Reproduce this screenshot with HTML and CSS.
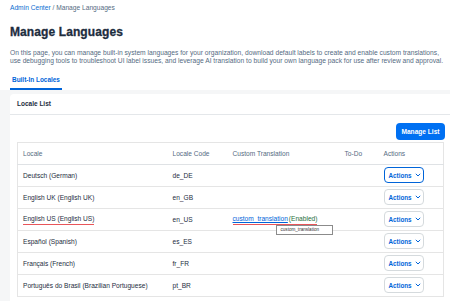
FILE: index.html
```html
<!DOCTYPE html>
<html>
<head>
<meta charset="utf-8">
<link rel="stylesheet" href="styles.css">
</head>
<body>
<div class="page">
  <header class="top">
    <div class="crumbs"><a class="crumb-link">Admin Center</a> <span class="crumb-cur">/ Manage Languages</span></div>
    <h1 class="title">Manage Languages</h1>
    <p class="desc"><span class="line">On this page, you can manage built-in system languages for your organization, download default labels to create and enable custom translations,</span><span class="line">use debugging tools to troubleshoot UI label issues, and leverage AI translation to build your own language pack for use after review and approval.</span></p>
    <nav class="tabs"><span class="tab active">Built-In Locales</span></nav>
  </header>
  <main class="body">
    <section class="card">
      <div class="card-head">Locale List</div>
      <div class="toolbar"><button class="btn-primary">Manage List</button></div>
      <table class="grid">
        <colgroup><col class="c1"><col class="c2"><col class="c3"><col class="c4"><col></colgroup>
        <thead>
          <tr><th>Locale</th><th>Locale Code</th><th>Custom Translation</th><th>To-Do</th><th>Actions</th></tr>
        </thead>
        <tbody>
          <tr><td>Deutsch (German)</td><td>de_DE</td><td></td><td></td><td><button class="btn-act focus">Actions <svg class="chev" viewBox="0 0 6 4"><polyline points="0.8,0.8 3,3 5.2,0.8"/></svg></button></td></tr>
          <tr><td>English UK (English UK)</td><td>en_GB</td><td></td><td></td><td><button class="btn-act">Actions <svg class="chev" viewBox="0 0 6 4"><polyline points="0.8,0.8 3,3 5.2,0.8"/></svg></button></td></tr>
          <tr><td><span class="mark">English US (English US)</span></td><td>en_US</td><td><span class="mark"><span class="linkwrap"><a class="link">custom_translation</a><span class="tip">custom_translation</span></span><span class="ok">(Enabled)</span></span></td><td></td><td><button class="btn-act">Actions <svg class="chev" viewBox="0 0 6 4"><polyline points="0.8,0.8 3,3 5.2,0.8"/></svg></button></td></tr>
          <tr><td>Español (Spanish)</td><td>es_ES</td><td></td><td></td><td><button class="btn-act">Actions <svg class="chev" viewBox="0 0 6 4"><polyline points="0.8,0.8 3,3 5.2,0.8"/></svg></button></td></tr>
          <tr><td>Français (French)</td><td>fr_FR</td><td></td><td></td><td><button class="btn-act">Actions <svg class="chev" viewBox="0 0 6 4"><polyline points="0.8,0.8 3,3 5.2,0.8"/></svg></button></td></tr>
          <tr><td>Português do Brasil (Brazilian Portuguese)</td><td>pt_BR</td><td></td><td></td><td><button class="btn-act">Actions <svg class="chev" viewBox="0 0 6 4"><polyline points="0.8,0.8 3,3 5.2,0.8"/></svg></button></td></tr>
        </tbody>
      </table>
    </section>
  </main>
</div>
</body>
</html>
```

FILE: styles.css
```css
* { box-sizing: border-box; }
html, body { margin: 0; padding: 0; }
body {
  width: 450px;
  height: 301px;
  overflow: hidden;
  font-family: "Liberation Sans", Arial, sans-serif;
  color: #1d2d3e;
  background: #f5f6f7;
}
.page { display: flex; flex-direction: column; min-height: 301px; }
.top {
  background: #fff;
  padding: 4px 0 0 10px;
  display: flex;
  flex-direction: column;
}
.crumbs { font-size: 6.65px; line-height: 8px; white-space: nowrap; }
.crumb-link { color: #0a6ed1; }
.crumb-cur { color: #556b82; }
.title {
  margin: 13px 0 0;
  font-size: 12px;
  line-height: 14px;
  font-weight: 700;
  color: #1d2d3e;
  letter-spacing: 0.1px;
  -webkit-text-stroke: 0.3px #1d2d3e;
}
.desc {
  margin: 10px 0 0;
  font-size: 6.7px;
  line-height: 7.5px;
  color: #556b82;
}
.desc .line { display: block; white-space: nowrap; }
.tabs { margin-top: 12px; display: flex; }
.tab {
  font-size: 6.45px;
  line-height: 8px;
  font-weight: 700;
  color: #0064d9;
  padding: 0 1px 3.5px 2px;
  border-bottom: 2px solid #0064d9;
  width: 52px;
}
.body { flex: 1; padding: 4px 0 0 10px; }
.card {
  background: #fff;
  margin-right: -2px;
  border-radius: 4px 0 0 0;
  padding-bottom: 10px;
}
.card-head {
  height: 21px;
  padding: 0 7px;
  display: flex;
  align-items: center;
  font-size: 6.5px;
  font-weight: 700;
  color: #1d2d3e;
  border-bottom: 1px solid #e4e7ea;
}
.toolbar {
  display: flex;
  justify-content: flex-end;
  padding: 8px 7px 2px;
}
.btn-primary {
  height: 17px;
  width: 49px;
  padding: 0;
  border: none;
  border-radius: 4px;
  background: #0070f2;
  color: #fff;
  font-family: inherit;
  font-size: 6.6px;
  font-weight: 700;
}
.grid {
  margin-left: 7px;
  width: 427px;
  border-collapse: collapse;
  table-layout: fixed;
  border: 1px solid #e5e5e5;
  font-size: 6.6px;
}
.c1 { width: 150px; }
.c2 { width: 60px; }
.c3 { width: 112px; }
.c4 { width: 39px; }
.grid th, .grid td {
  height: 22px;
  padding: 0 0 0 5px;
  text-align: left;
  vertical-align: middle;
  white-space: nowrap;
  border-bottom: 1px solid #e5e5e5;
}
.grid th { font-weight: 400; color: #556b82; border-bottom-color: #dfe2e5; }
.grid td { color: #1d2d3e; }
.mark {
  display: inline-block;
  padding-bottom: 1px;
  border-bottom: 1.5px solid #e8555a;
  line-height: 8px;
  margin-top: 2px;
}
.linkwrap { position: relative; }
.link { color: #0064d9; text-decoration: underline; }
.ok { color: #256f3a; margin-left: 1px; }
.tip {
  position: absolute;
  left: 43px;
  top: 10px;
  width: 57px;
  height: 10px;
  background: #fff;
  border: 1px solid #8b8b8b;
  font-size: 4.6px;
  line-height: 8px;
  padding-left: 4px;
  color: #333;
  text-decoration: none;
  z-index: 2;
}
.btn-act {
  width: 40px;
  height: 16px;
  padding: 0 0 0 4px;
  display: flex;
  align-items: center;
  gap: 3px;
  background: #fff;
  border: 1px solid #d5dadd;
  border-radius: 4px;
  color: #0064d9;
  font-family: inherit;
  font-size: 6.3px;
  font-weight: 700;
}
.btn-act.focus { border-color: #0064d9; }
.chev { width: 6px; height: 4px; fill: none; stroke: #0064d9; stroke-width: 1; }
```
